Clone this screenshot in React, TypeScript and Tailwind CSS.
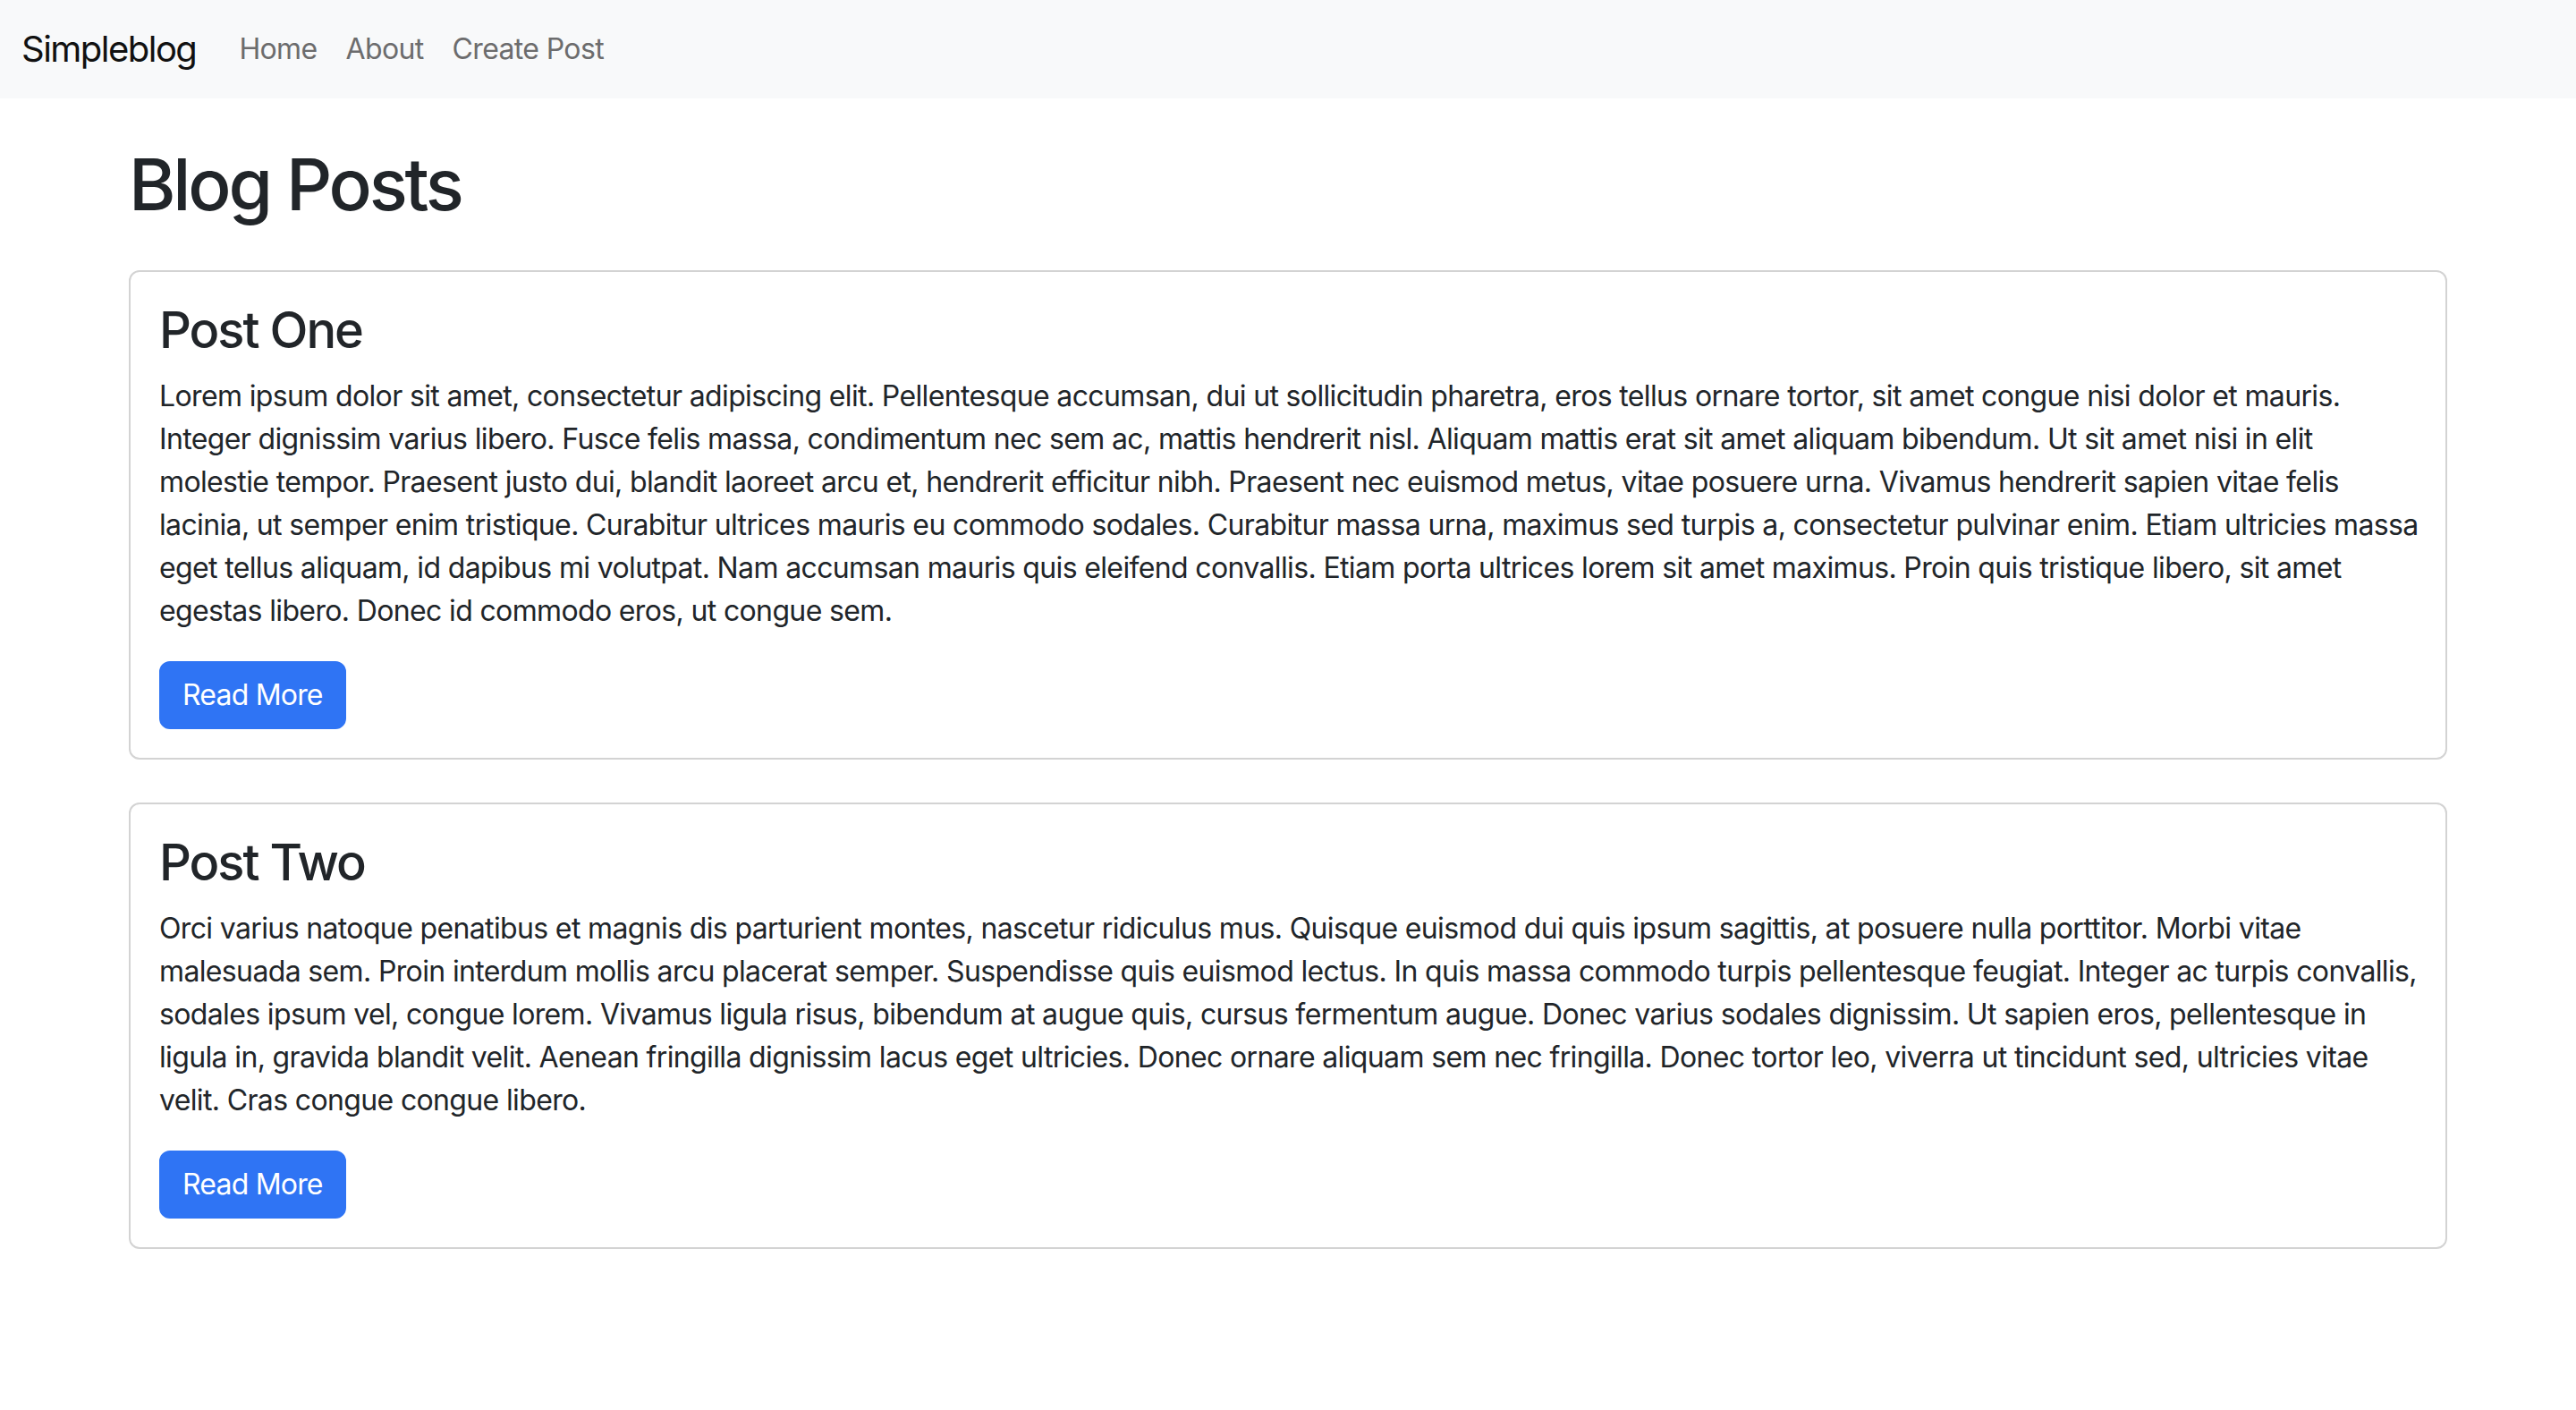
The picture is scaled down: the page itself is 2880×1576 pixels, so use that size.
// Lines are kept as in the design so the wrap points stay put
const posts = [
  {
    title: "Post One",
    lines: [
      "Lorem ipsum dolor sit amet, consectetur adipiscing elit. Pellentesque accumsan, dui ut sollicitudin pharetra, eros tellus ornare tortor, sit amet congue nisi dolor et mauris.",
      "Integer dignissim varius libero. Fusce felis massa, condimentum nec sem ac, mattis hendrerit nisl. Aliquam mattis erat sit amet aliquam bibendum. Ut sit amet nisi in elit",
      "molestie tempor. Praesent justo dui, blandit laoreet arcu et, hendrerit efficitur nibh. Praesent nec euismod metus, vitae posuere urna. Vivamus hendrerit sapien vitae felis",
      "lacinia, ut semper enim tristique. Curabitur ultrices mauris eu commodo sodales. Curabitur massa urna, maximus sed turpis a, consectetur pulvinar enim. Etiam ultricies massa",
      "eget tellus aliquam, id dapibus mi volutpat. Nam accumsan mauris quis eleifend convallis. Etiam porta ultrices lorem sit amet maximus. Proin quis tristique libero, sit amet",
      "egestas libero. Donec id commodo eros, ut congue sem.",
    ],
  },
  {
    title: "Post Two",
    lines: [
      "Orci varius natoque penatibus et magnis dis parturient montes, nascetur ridiculus mus. Quisque euismod dui quis ipsum sagittis, at posuere nulla porttitor. Morbi vitae",
      "malesuada sem. Proin interdum mollis arcu placerat semper. Suspendisse quis euismod lectus. In quis massa commodo turpis pellentesque feugiat. Integer ac turpis convallis,",
      "sodales ipsum vel, congue lorem. Vivamus ligula risus, bibendum at augue quis, cursus fermentum augue. Donec varius sodales dignissim. Ut sapien eros, pellentesque in",
      "ligula in, gravida blandit velit. Aenean fringilla dignissim lacus eget ultricies. Donec ornare aliquam sem nec fringilla. Donec tortor leo, viverra ut tincidunt sed, ultricies vitae",
      "velit. Cras congue congue libero.",
    ],
  },
];

export default function App() {
  return (
    <div className="min-h-screen bg-white text-[#212529] font-['Inter','Liberation_Sans',sans-serif]">
      {/* Navbar */}
      <nav className="bg-[#f8f9fa] py-[15px]">
        <div className="px-6 flex items-center">
          <a href="#" className="py-2.5 mr-8 text-[40px] leading-[60px] text-[#111] tracking-[-0.038em]">
            Simpleblog
          </a>
          <ul className="flex items-center">
            {["Home", "About", "Create Post"].map((item) => (
              <li key={item}>
                <a href="#" className="block px-4 py-4 text-[32px] leading-[48px] text-[#6c6c6d] tracking-[-0.02em]">
                  {item}
                </a>
              </li>
            ))}
          </ul>
        </div>
      </nav>

      {/* Content */}
      <div className="w-[2640px] mx-auto px-6 mt-12">
        <h1 className="text-[80px] leading-[96px] font-medium mb-12 tracking-[-0.04em]">Blog Posts</h1>

        {posts.map((post) => (
          <div key={post.title} className="border-2 border-[#d3d3d3] rounded-xl mb-12">
            <div className="p-8">
              <h3 className="text-[56px] leading-[67px] font-medium mb-4 tracking-[-0.036em]">{post.title}</h3>
              <p className="text-[32px] leading-[48px] mb-8 tracking-[-0.02em]">
                {post.lines.map((line, i) => (
                  <span key={i} className="block whitespace-nowrap">
                    {line}
                  </span>
                ))}
              </p>
              <a
                href="#"
                className="inline-block bg-[#2f74f4] text-white text-[32px] leading-[48px] px-6 py-3 border-2 border-[#2f74f4] rounded-xl tracking-[-0.025em]"
              >
                Read More
              </a>
            </div>
          </div>
        ))}
      </div>
    </div>
  );
}
